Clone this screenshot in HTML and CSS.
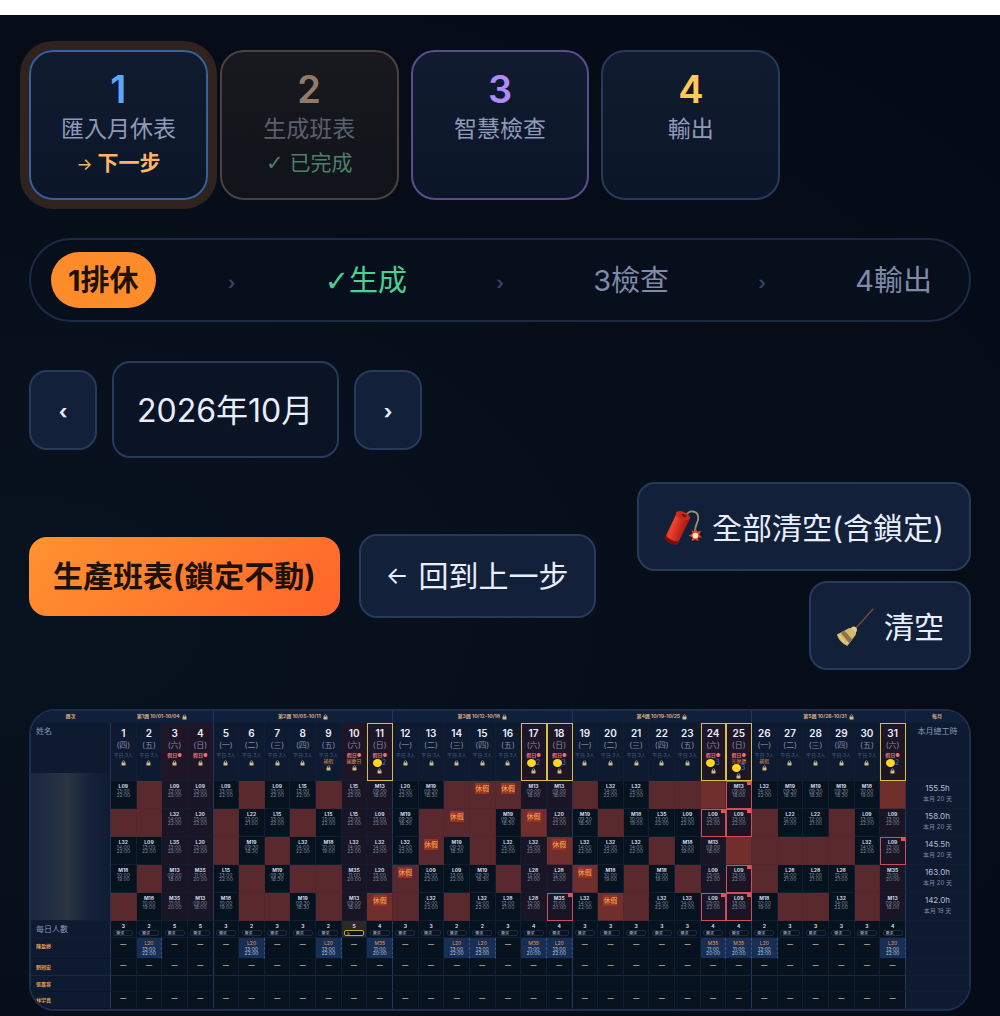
FILE: index.html
```html
<!DOCTYPE html>
<html lang="zh-Hant">
<head>
<meta charset="utf-8">
<meta name="viewport" content="width=device-width, initial-scale=1">
<title>排班表</title>
<link rel="stylesheet" href="styles.css">
</head>
<body>
<main class="app">

<!-- steps -->
<section class="steps">
	<button class="step step-import next">
		<span class="step-num">1</span>
		<span class="step-label">匯入月休表</span>
		<span class="step-state"><span class="arrow">→</span> 下一步</span>
	</button>
	<button class="step step-build done">
		<span class="step-num">2</span>
		<span class="step-label">生成班表</span>
		<span class="step-state"><span class="tick">✓</span> 已完成</span>
	</button>
	<button class="step step-check">
		<span class="step-num">3</span>
		<span class="step-label">智慧檢查</span>
	</button>
	<button class="step step-export">
		<span class="step-num">4</span>
		<span class="step-label">輸出</span>
	</button>
</section>

<!-- progress -->
<nav class="flow">
	<a class="flow-item active" href="#">1排休</a>
	<span class="flow-sep">›</span>
	<a class="flow-item finished" href="#"><span class="tick">✓</span>生成</a>
	<span class="flow-sep">›</span>
	<a class="flow-item" href="#">3檢查</a>
	<span class="flow-sep">›</span>
	<a class="flow-item" href="#">4輸出</a>
</nav>

<!-- month -->
<div class="month">
	<button class="month-nav" aria-label="上個月">‹</button>
	<input class="month-input" type="text" value="2026年10月" aria-label="月份">
	<button class="month-nav" aria-label="下個月">›</button>
</div>

<!-- actions -->
<div class="actions">
	<button class="btn btn-primary">生產班表(鎖定不動)</button>
	<button class="btn btn-back"><span class="arrow">←</span> 回到上一步</button>
	<div class="actions-right">
		<button class="btn btn-clear">
			<svg class="emoji" viewBox="0 0 40 40" aria-hidden="true">
				<defs>
					<linearGradient id="tube" x1="0" y1="0" x2="1" y2="0.4">
						<stop offset="0" stop-color="#a3140c"/>
						<stop offset="0.4" stop-color="#f0422c"/>
						<stop offset="1" stop-color="#9c100a"/>
					</linearGradient>
				</defs>
				<path d="M23 7C27 0 35 2 36 8C37 14 31 18 33 26" fill="none" stroke="#9a8c7a" stroke-width="2"/>
				<path d="M13 5L1 30C2 34 8 38 14 37L27 11Z" fill="url(#tube)"/>
				<path d="M1 30C2 34 8 38 14 37L15 34C9 34 4 31 2 27Z" fill="#7d0b08"/>
				<ellipse cx="20" cy="7" rx="8" ry="4" transform="rotate(24 20 7)" fill="#c92a1b"/>
				<ellipse cx="21" cy="7" rx="3" ry="1.5" transform="rotate(24 21 7)" fill="#7a1610"/>
				<path d="M33 20l2 4 4-1-2 4 3 3-4 0 0 4-3-2-4 2 1-4-4-2 4-2-1-4 3 2z" fill="#e2472a"/>
				<circle cx="33" cy="28" r="3" fill="#ffe9b0"/>
			</svg>
			<span>全部清空(含鎖定)</span>
		</button>
		<button class="btn btn-clear">
			<svg class="emoji" viewBox="0 0 40 40" aria-hidden="true">
				<path d="M39 1L21 21" stroke="#6f4a2e" stroke-width="1.6" stroke-linecap="round"/>
				<path d="M17 20C19 18 23 21 22 24L20 28L13 23Z" fill="#e0cf8c"/>
				<path d="M14 21L1 28C2 33 7 38 12 40L21 28C20 24 17 21 14 21Z" fill="#d2b96e"/>
				<path d="M9 24L17 33L14 37L5 26Z" fill="#93704a"/>
				<path d="M3 29L6 32M6 33L9 36M10 38L12 36" stroke="#f1e3a8" stroke-width="1"/>
			</svg>
			<span>清空</span>
		</button>
	</div>
</div>

<!-- roster -->
<div class="roster-wrap">
<table class="roster">
	<colgroup>
		<col class="col-name">
		<col span="31">
		<col class="col-total">
	</colgroup>
	<thead id="head"></thead>
	<tbody id="body"></tbody>
</table>
</div>

</main>
<script src="roster.js"></script>
</body>
</html>
```
FILE: styles.css
```css
* {
	box-sizing: border-box;
}
body {
	margin: 0;
	background: #fff;
	font-family: Inter, "Noto Sans CJK TC", sans-serif;
	color: #e8eefc;
}
button, input, select {
	font-family: inherit;
	color: inherit;
	margin: 0;
}
.app {
	margin-top: 15px;
	padding: 35px 29px 6px;
	background: radial-gradient(ellipse at 0% 60%, #08131f 0%, #060d19 60%, #040a15 100%);
}
.arrow {
	font-size: 80%;
	font-weight: 400;
}
.tick {
	font-family: "DejaVu Sans", sans-serif;
}

/* steps */
.steps {
	display: grid;
	grid-template-columns: repeat(5, 1fr);
	gap: 12px;
}
.step {
	display: flex;
	flex-direction: column;
	align-items: center;
	min-height: 150px;
	padding: 16px 8px 18px;
	border: 2px solid #283a5a;
	border-radius: 24px;
	background: linear-gradient(#101b2f, #0b1629);
}
.step-num {
	font-size: 38px;
	font-weight: 600;
	line-height: 42px;
}
.step-label {
	font-size: 23px;
	line-height: 38px;
	color: #8e9ab8;
}
.step-state {
	font-size: 21px;
	line-height: 30px;
}
.step-import {
	border-color: #366199;
}
.step-import .step-num {
	color: #5ba7ff;
}
.step.next {
	box-shadow: 0 0 0 9px #30221f;
}
.next .step-state {
	color: #ffb366;
	font-weight: 700;
}
.step-build {
	border-color: #4b423f;
	background: linear-gradient(#18191f, #101319);
}
.step-build .step-num {
	color: #8f7a6c;
}
.step-build .step-label {
	color: #5b606c;
}
.done .step-state {
	color: #4b8069;
}
.step-check {
	border-color: #5c4c8e;
}
.step-check .step-num {
	color: #b18cf8;
}
.step-export .step-num {
	color: #ffc95c;
}

/* progress */
.flow {
	display: flex;
	align-items: center;
	justify-content: space-between;
	margin-top: 38px;
	padding: 12px 20px;
	border: 2px solid #1c2a44;
	border-radius: 42px;
	background: #070f1d;
}
.flow-item {
	padding: 2px 17px 0;
	border-radius: 28px;
	font-size: 29px;
	line-height: 54px;
	color: #7f8aa8;
	text-decoration: none;
}
.flow-item.active {
	background: #ff8c2b;
	color: #1c1208;
	font-weight: 700;
}
.flow-item.finished {
	color: #46d391;
}
.flow-sep {
	padding-top: 4px;
	font-size: 18px;
	font-weight: 700;
	color: #35415b;
}

/* month */
.month {
	display: flex;
	align-items: center;
	gap: 15px;
	margin-top: 39px;
}
.month-nav {
	width: 68px;
	height: 80px;
	padding: 4px 0 0;
	border: 2px solid #283a5a;
	border-radius: 18px;
	background: #132039;
	font-size: 20px;
	font-weight: 700;
}
.month-input {
	width: 227px;
	height: 97px;
	padding: 0 23px 4px;
	border: 2px solid #283a5a;
	border-radius: 18px;
	background: #0a1425;
	font-size: 32px;
}

/* actions */
.actions {
	display: flex;
	align-items: center;
	gap: 19px;
	margin-top: 24px;
}
.actions-right {
	display: flex;
	flex-direction: column;
	align-items: flex-end;
	gap: 10px;
	margin-left: auto;
}
.btn {
	display: flex;
	align-items: center;
	gap: 10px;
	padding: 0 25px;
	border: 2px solid #283a5a;
	border-radius: 18px;
	background: #132039;
	font-size: 30px;
	line-height: 44px;
	white-space: nowrap;
}
.btn-primary {
	height: 79px;
	padding: 0 24px;
	border: 0;
	background: linear-gradient(135deg, #ff932f, #ff652b);
	color: #1c1208;
	font-weight: 700;
}
.btn-back {
	height: 84px;
}
.btn-clear {
	height: 89px;
	padding-top: 3px;
}
.emoji {
	width: 38px;
	height: 38px;
}

/* roster */
.roster-wrap {
	margin-top: 39px;
	border: 2px solid #1f2e4a;
	border-radius: 26px;
	overflow: hidden;
	background: #07121f;
}
.roster {
	width: 100%;
	table-layout: fixed;
	border-collapse: separate;
	border-spacing: 0;
	font-size: 5px;
	line-height: 5px;
	text-align: center;
}
.col-name {
	width: 80px;
}
.col-total {
	width: 63px;
}
.roster th, .roster td {
	padding: 0;
	border-right: 1px solid #101d33;
	border-bottom: 1px solid #101d33;
	font-weight: 400;
	vertical-align: top;
	white-space: nowrap;
}
.roster .week-end, .roster .name {
	border-right-color: #22365a;
}
.roster .week {
	height: 12px;
	background: #10203c;
	color: #d9a978;
	font-weight: 700;
	line-height: 11px;
}
.lock {
	display: block;
	width: 5px;
	height: 6px;
	margin: 1px auto 0;
}
.week .lock {
	display: inline-block;
	margin: 0 0 0 2px;
	vertical-align: middle;
}
.roster .name, .roster .total {
	background: #0e1a30;
}
.roster .name {
	text-align: left;
}
.roster .day {
	height: 58px;
	padding-top: 4px;
	background: #0e1a30;
}
.roster .day.weekend {
	background: #1e1527;
}
.roster .day.marked {
	outline: 1px solid #d9bf45;
	outline-offset: -1px;
}
.day-num {
	display: block;
	font-size: 10px;
	font-weight: 600;
	line-height: 12px;
}
.day-week {
	display: block;
	font-size: 8px;
	line-height: 12px;
	color: #7f8ba8;
}
.day-kind {
	display: block;
	line-height: 8px;
	color: #485778;
}
.weekend .day-kind {
	color: #e8737b;
	font-weight: 700;
}
.day-note {
	display: block;
	line-height: 5px;
	color: #d88c52;
}
.day-sun {
	display: flex;
	align-items: center;
	justify-content: center;
	font-size: 7px;
	line-height: 8px;
	color: #2f76d8;
}
.day-sun::before {
	content: "";
	width: 9px;
	height: 8px;
	border-radius: 50%;
	background: #ffd81f;
}

/* shifts */
.roster .shift {
	position: relative;
	height: 28px;
	padding-top: 2px;
	background: #07121f;
	color: #7c879e;
}
.roster .shift.weekend {
	background: #191524;
}
.roster .shift.off {
	background: #5a292e;
	border-color: #54272e;
}
.roster .shift.off.hot {
	background: #702e2d;
}
.roster .shift.alert {
	outline: 1px solid #cf4d5b;
	outline-offset: -1px;
}
.shift.alert::after {
	content: "";
	position: absolute;
	top: 0;
	right: 0;
	width: 4px;
	height: 4px;
	background: #e8505b;
}
.code {
	display: block;
	line-height: 6px;
	font-weight: 700;
	color: #d3dbea;
}
.time {
	display: block;
	line-height: 4px;
}
.leave {
	display: inline-block;
	background: #8f352a;
	color: #ffa94a;
	font-size: 7px;
	line-height: 11px;
}
.roster .hidden-names {
	position: relative;
}
.hidden-names::before {
	content: "";
	position: absolute;
	inset: -8px 0 0 0;
	background: linear-gradient(90deg, #1b2841, #222e42 25%, #2a3441 45%, #233041 55%, #14213a 75%, #0f1c33 100%);
}
.roster .total {
	padding-top: 3px;
	border-right: 0;
	font-size: 6px;
	color: #7f8ba8;
}
.hours {
	display: block;
	font-size: 8px;
	line-height: 9px;
	color: #b4bdd0;
}
.days {
	display: block;
	line-height: 12px;
}
.roster .title, .roster .total.title {
	padding: 2px 5px;
	font-size: 8px;
	line-height: 12px;
	color: #8b98b6;
}
.roster .total.title {
	padding: 2px 0;
}

/* headcount */
.roster .count {
	height: 17px;
	padding-top: 2px;
}
.need {
	display: block;
	width: 20px;
	height: 6px;
	margin: 1px auto 0;
	padding: 0 2px;
	border: 1px solid #1c2a44;
	border-radius: 2px;
	background: #081221;
	font-size: 4px;
	line-height: 4px;
	color: #b4bfd4;
}
.count.over {
	background: #2c2925;
}
.over .need {
	border-color: #c3a53c;
	color: #f0c850;
}

/* part-time rows */
.roster .part {
	height: 16px;
	padding-top: 2px;
	border-bottom-color: #0b1728;
}
.roster .row-first .part {
	height: 21px;
}
.roster .row-line .part, .roster .row-last .part {
	height: 17px;
}
.roster .part.name {
	padding: 6px 5px 0;
	color: #e09a5a;
	font-weight: 700;
}
.roster .row-line .part {
	border-bottom-color: #1a2941;
}
.pick {
	display: block;
	width: 100%;
	height: 7px;
	padding: 0 6px;
	border: 0;
	background: transparent;
	appearance: none;
	font-size: 6px;
	font-weight: 700;
	line-height: 7px;
	color: #d0b49a;
	text-align: center;
}
.part.set {
	background: #172f55;
	border-right: 1px dashed #35558a;
}
.set .pick {
	font-size: 5px;
	font-weight: 400;
	color: #ee9650;
}
.set .time {
	color: #b4c2da;
}
```
FILE: roster.js
```javascript
const WEEKS = [
	{ label: '第1週 10/01-10/04', days: 4 },
	{ label: '第2週 10/05-10/11', days: 7 },
	{ label: '第3週 10/12-10/18', days: 7 },
	{ label: '第4週 10/19-10/25', days: 7 },
	{ label: '第5週 10/26-10/31', days: 6 }
];
const WEEKDAYS = ['日', '一', '二', '三', '四', '五', '六'];
const WEEK_END = [4, 11, 18, 25, 31];
const NOTES = { 9: '補假', 10: '國慶日', 25: '光復節', 26: '補假' };
const SUNS = { 11: 2, 17: 2, 18: 3, 24: 3, 25: 3, 31: 2 };
const TIMES = {
	L09: ['13:00', '22:00'], L15: ['13:00', '22:00'], L20: ['13:00', '22:00'],
	L22: ['12:00', '21:00'], L28: ['12:00', '21:00'], L32: ['14:00', '22:00'],
	L35: ['13:00', '22:00'], M13: ['09:00', '18:00'], M18: ['10:00', '19:00'],
	M19: ['09:30', '18:30'], M35: ['11:00', '20:00']
};

// "-" day off, "=" day off on a busy day, "*" requested leave, "!" rule warning
const STAFF = [
	{ hours: '155.5h', days: 20, row: 'L09 - L09 L09 L09 - L09 L15 - L15 M13 L20 M19 - * * M13 M13 - L32 L32 - - = M13! L32 M19 M19 M19 M18 =' },
	{ hours: '158.0h', days: 20, row: '- - L32 L20 - L22 L15 - L15 L15 L09 M19 - * - M19 =* L20 M19 - M18 L35 L09 L09! L09! - L22 L22 - L09 L09' },
	{ hours: '145.5h', days: 20, row: 'L32 L09 L35 L20 - M19 - L32 M18 L32 L32 L32 * M19 - L32 L32 =* L32 L32 L32 - M18 M13 = - - - - L32 L09!' },
	{ hours: '163.0h', days: 20, row: 'M18 - M13 M35 L15 - M19 - - M35 L20 * L09 L09 M19 - L28 L28 =* M18 - M18 - L09 L09! - L28 L28 L28 - M35' },
	{ hours: '142.0h', days: 19, row: '- M18 M35 M13 M18 - - M19 - M13 =* - L32 - L32 L28 L28 M35! L32 =* - L32 L32 L09! L09! M18 - - L32 - M13' }
];
const COUNTS = [3, 2, 5, 5, 3, 2, 3, 3, 2, 5, 4, 3, 3, 2, 2, 3, 4, 4, 3, 3, 3, 3, 3, 4, 4, 2, 3, 3, 3, 3, 4];
const PART_TIME = [
	{ name: '陳盈婷', cls: 'row-first', set: { 2: 'L20', 6: 'L20', 9: 'L20', 11: 'M35', 14: 'L20', 15: 'L20', 17: 'M35', 18: 'L20', 24: 'M35', 25: 'M35', 26: 'L20', 31: 'L20' } },
	{ name: '劉冠宏', cls: 'row-line', set: {} },
	{ name: '張嘉容', cls: '', empty: true, set: {} },
	{ name: '林宇真', cls: 'row-last', set: {} }
];
const LOCK = '<svg class="lock" viewBox="0 0 10 12"><path d="M2.5 6V4a2.5 2.5 0 0 1 5 0v2" fill="none" stroke="#9aa3a0" stroke-width="1.5"/><rect x="1" y="5" width="8" height="6" rx="1" fill="#c9bd86"/></svg>';

const days = COUNTS.map((c, i) => i + 1);
const weekday = d => (d + 3) % 7;

function cls(d, base) {
	let c = base;
	if (weekday(d) === 0 || weekday(d) === 6) c += ' weekend';
	if (WEEK_END.includes(d)) c += ' week-end';
	return c;
}

function dayHead(d) {
	const weekend = weekday(d) === 0 || weekday(d) === 6;
	return `<th class="${cls(d, 'day')}${SUNS[d] ? ' marked' : ''}">
		<span class="day-num">${d}</span>
		<span class="day-week">(${WEEKDAYS[weekday(d)]})</span>
		<span class="day-kind">${weekend ? '假日●' : '平日·3人'}</span>
		${NOTES[d] ? `<span class="day-note">${NOTES[d]}</span>` : ''}
		${SUNS[d] ? `<span class="day-sun">${SUNS[d]}</span>` : ''}
		${LOCK}</th>`;
}

function times(code) {
	return TIMES[code].map(t => `<span class="time">${t}</span>`).join('');
}

function shift(value, d) {
	if (/^[-=*]/.test(value)) {
		const hot = value[0] === '=' ? ' hot' : '';
		return `<td class="${cls(d, 'shift')} off${hot}">${value.includes('*') ? '<span class="leave">休假</span>' : ''}</td>`;
	}
	const code = value.replace('!', '');
	return `<td class="${cls(d, 'shift')}${value.endsWith('!') ? ' alert' : ''}"><span class="code">${code}</span>${times(code)}</td>`;
}

function part(p, d) {
	const code = p.set[d];
	const text = p.empty ? '' : code || '—';
	return `<td class="part${WEEK_END.includes(d) ? ' week-end' : ''}${code ? ' set' : ''}">
		<select class="pick" aria-label="${p.name} ${d}日"><option>${text}</option></select>${code ? times(code) : ''}</td>`;
}

document.getElementById('head').innerHTML =
	'<tr><th class="week name-week">週次</th>' +
	WEEKS.map(w => `<th class="week week-end" colspan="${w.days}">${w.label}${LOCK}</th>`).join('') +
	'<th class="week">每月</th></tr>' +
	'<tr><th class="name title">姓名</th>' + days.map(dayHead).join('') + '<th class="total title">本月總工時</th></tr>';

document.getElementById('body').innerHTML =
	STAFF.map((s, i) => '<tr>' +
		(i === 0 ? '<th class="name hidden-names" rowspan="5"></th>' : '') +
		s.row.split(' ').map((v, n) => shift(v, n + 1)).join('') +
		`<td class="total"><span class="hours">${s.hours}</span><span class="days">本月 ${s.days} 天</span></td></tr>`).join('') +
	'<tr><th class="name title">每日人數</th>' +
	COUNTS.map((c, i) => `<td class="count${WEEK_END.includes(i + 1) ? ' week-end' : ''}${i === 9 ? ' over' : ''}"><span class="code">${c}</span>
		<input class="need" value="${i === 9 ? '5' : '需求'}" aria-label="${i + 1}日需求人數"></td>`).join('') +
	'<td class="total"></td></tr>' +
	PART_TIME.map(p => `<tr class="${p.cls}"><th class="part name">${p.name}</th>` +
		days.map(d => part(p, d)).join('') + '<td class="total"></td></tr>').join('');
```
